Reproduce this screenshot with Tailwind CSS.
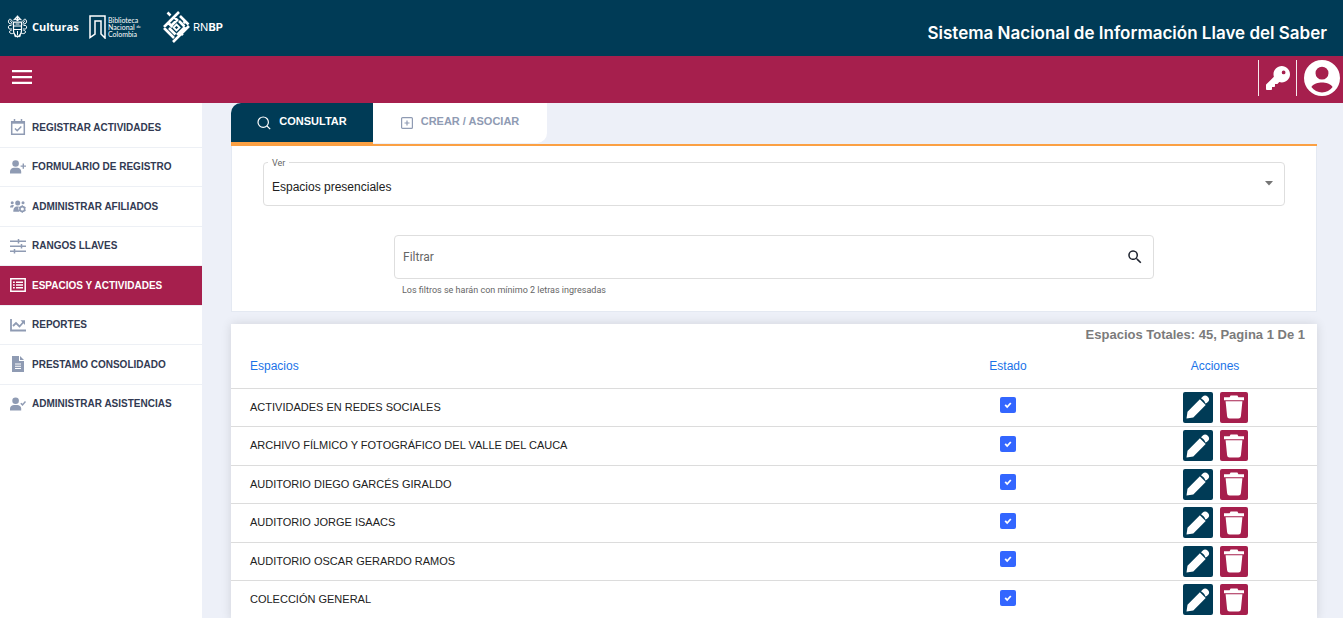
<!DOCTYPE html>
<html lang="es">
<head>
<meta charset="utf-8">
<meta name="viewport" content="width=device-width, initial-scale=1">
<title>Sistema Nacional de Información Llave del Saber</title>
<script src="https://cdn.jsdelivr.net/npm/@tailwindcss/browser@4"></script>
</head>
<body class="flex h-screen flex-col overflow-hidden bg-[#edf0f8] font-['Liberation_Sans',Arial,sans-serif] text-[#212529]">

<svg class="hidden" aria-hidden="true">
  <symbol id="pencil" viewBox="0 0 24 24"><path fill="currentColor" d="M.5 23.500l1-6.800L13.900 4.300l5.800 5.800L7.300 22.500zM15 3.200l1.800-1.800c1.500-1.500 3.400-1.300 5 .3s1.800 3.500.3 5L20.700 8.100l-1.300.3C18.500 6 17.500 4.800 15 3.200z"/></symbol>
  <symbol id="trash" viewBox="0 0 20 24"><path fill="currentColor" d="M0 2.200h5.600L6.600 .6h6.800l1 1.600H20v3H0zM1.600 6.300h16.800l-1.500 14.900a2.500 2.500 0 0 1-2.500 2.300H5.600a2.500 2.500 0 0 1-2.500-2.300z"/></symbol>
</svg>

<header class="flex h-14 shrink-0 items-center justify-between bg-[#003b56] pr-4 pl-[7px] text-white">
  <div class="flex items-center pb-[2px]">
    <div class="flex w-[82px] items-center gap-1">
      <svg class="h-6 w-[21px]" viewBox="0 0 42 48" fill="none" stroke="currentColor" stroke-width="2" aria-hidden="true">
        <path d="M13 14h16v17c0 6-3 10-8 13-5-3-8-7-8-13z" stroke-width="2.500"/><path d="M13 22h16M13 29h16M21 32v9M17 18h8"/>
        <path d="M13 10c3-1 5-2 6-6h4c1 4 3 5 6 6M15 7l6 4 6-4M21 1v10" stroke-width="2.500"/>
        <path d="M11 13C7 5 2 9 3 14c1 4 4 4 8 4M31 13c4-8 9-4 8 1-1 4-4 4-8 4M9 21c-5-1-7 1-6 5 1 3 4 2 7 2M33 21c5-1 7 1 6 5-1 3-4 2-7 2M9 31c-4 0-5 2-3 5 2 2 5 1 7 1M33 31c4 0 5 2 3 5-2 2-5 1-7 1M14 41l4 3M28 41l-4 3M6 11l4 5M36 11l-4 5"/>
      </svg>
      <span class="font-['Open_Sans',sans-serif] text-[11px] leading-4 font-bold">Culturas</span>
    </div>
    <div class="flex w-[74px] items-center gap-[2px]">
      <svg class="h-6 w-[17px] shrink-0" viewBox="0 0 17 24" fill="none" stroke="currentColor" stroke-width="1.500" aria-hidden="true"><path d="M1 1h15v22l-4-4V6H6v13l-5 3.500z"/></svg>
      <div class="font-[Lato,sans-serif] text-[7px] leading-[7px] whitespace-nowrap">Biblioteca<br>Nacional <sup class="text-[4px]">de</sup><br>Colombia</div>
    </div>
    <div class="flex items-center gap-[3px]">
      <svg class="h-8 w-[27px]" viewBox="0 0 27 32" fill="none" stroke="currentColor" stroke-width="2.600" aria-hidden="true">
        <path d="M4.500 1.500l3 3M6 11l10-10M11 6l4 4M17 5l8.500 8.500M1 16l7-7M5.500 12l4 4M14 9l-6.500 6.500M16 10l5.500 5.500M1 17l10 10M6 17l6.500 6.500M22 16l-8 8M26 15L10 31M16.500 20.500l3.500 3.500M20.500 12l2.500-2"/>
        <path d="M13.500 13.500l3 3-3 3-3-3z" stroke-width="1.800"/>
      </svg>
      <span class="font-[Inter,sans-serif] text-[11px] leading-4">RN<b>BP</b></span>
    </div>
  </div>
  <h1 class="mt-3 font-[Inter,sans-serif] text-[17px] font-semibold">Sistema Nacional de Información Llave del Saber</h1>
</header>

<nav class="flex h-[47px] shrink-0 items-center justify-between bg-[#a61f4d] pr-[3px] pl-3 text-white">
  <button type="button" aria-label="Menú" class="mb-[6px]">
    <svg class="h-[14px] w-5" viewBox="0 0 20 14" fill="currentColor"><path d="M0 0h20v2.300H0zM0 6h20v2.300H0zM0 11.700h20v2.300H0z"/></svg>
  </button>
  <div class="mb-[3px] flex h-9 items-center">
    <button type="button" aria-label="Llave" class="flex h-9 w-[38px] items-center justify-center border-l border-white/90">
      <svg class="h-6 w-6" viewBox="0 0 512 512" fill="currentColor"><path d="M336 352c97.200 0 176-78.800 176-176S433.200 0 336 0 160 78.800 160 176c0 18.700 2.900 36.800 8.300 53.700L7 391c-4.500 4.500-7 10.600-7 17v80c0 13.300 10.700 24 24 24h80c13.300 0 24-10.700 24-24v-40h40c13.300 0 24-10.700 24-24v-40h40c6.400 0 12.500-2.500 17-7l33.300-33.300c16.900 5.400 35 8.300 53.700 8.300zM376 96a40 40 0 1 1 0 80 40 40 0 1 1 0-80z"/></svg>
    </button>
    <button type="button" aria-label="Cuenta" class="flex h-9 items-center border-l border-white/90 pl-[7px]">
      <svg class="h-9 w-9" viewBox="2 2 20 20" fill="currentColor"><path d="M12 2a10 10 0 1 0 0 20 10 10 0 0 0 0-20zm0 3.700a3.600 3.600 0 1 1 0 7.200 3.600 3.600 0 0 1 0-7.200zm0 14.300c-2.300 0-4.500-1.100-5.900-3 .8-1.700 4-2.500 5.900-2.500s5.100.8 5.900 2.500a7.300 7.300 0 0 1-5.900 3z"/></svg>
    </button>
  </div>
</nav>

<div class="flex min-h-0 flex-1">
  <aside class="w-[202px] shrink-0 bg-white pt-[5px]">
    <ul class="flex h-[315px] flex-col text-[10px] font-bold text-[#323a52] [&_a]:flex [&_a]:h-full [&_a]:items-center [&_a]:gap-[6px] [&_a]:pl-[10px] [&_li]:flex-1 [&_li]:border-b [&_li]:border-[#edf0f5] [&_svg]:h-4 [&_svg]:w-4 [&_svg]:text-[#8f9bb3]">
      <li><a href="#"><svg viewBox="0 0 16 16" fill="none" stroke="currentColor" stroke-width="1.500"><path d="M1.700 2.700h12.600v12.500H1.700zM4.500 0v3M11.500 0v3M5 9.500l2.200 2.200L11.300 7.500"/><path d="M1.700 3.700h12.600" stroke-width="2"/></svg>REGISTRAR ACTIVIDADES</a></li>
      <li><a href="#"><svg viewBox="0 0 16 16" fill="currentColor"><circle cx="5.600" cy="4.500" r="3.300"/><path d="M0 14.500v-2C0 10 2 8.700 4 8.700h3.200c2 0 4 1.300 4 3.800v2zM12.600 4.500H14v2h2v1.300h-2v2h-1.400v-2h-2V6.500h2z"/></svg>FORMULARIO DE REGISTRO</a></li>
      <li><a href="#"><svg viewBox="0 0 16 16" fill="currentColor"><circle cx="2.200" cy="4.800" r="1.500"/><circle cx="7.700" cy="5" r="2.500"/><circle cx="13" cy="4.800" r="1.500"/><path d="M0 9.500C0 7.800 1 7 2.500 7h1.400L3 9.500zM3.300 13.800c0-3 1-5.300 3.500-5.300h2l-.5 2 1 3.300z"/><circle cx="12.300" cy="11" r="2.400" fill="none" stroke="currentColor" stroke-width="1.600"/><path stroke="currentColor" stroke-width="1.300" d="M12.300 7.300v1.500M12.300 13.200v1.500M9.100 9.200l1.200.7M14.300 12.100l1.200.7M15.500 9.200l-1.200.7M10.300 12.100l-1.200.7"/></svg>ADMINISTRAR AFILIADOS</a></li>
      <li><a href="#"><svg viewBox="0 0 16 16" fill="none" stroke="currentColor" stroke-width="1.500"><path d="M0 3.200h16M0 8.200h16M0 13.200h16M8.500 1v4.400M11.500 6v4.400M4.500 11v4.400"/></svg>RANGOS LLAVES</a></li>
      <li class="bg-[#a61f4d] text-white"><a href="#" aria-current="page"><svg viewBox="0 0 16 16" fill="none" stroke="white" stroke-width="1.500"><path d="M.8 1.800h14.400v12.400H.8zM6 5.200h7M6 8h7M6 10.800h7M3 5.200h1.800M3 8h1.800M3 10.800h1.800"/></svg>ESPACIOS Y ACTIVIDADES</a></li>
      <li><a href="#"><svg viewBox="0 0 16 16" fill="none" stroke="currentColor" stroke-width="1.800"><path d="M1 2v11.500h15M3 9l3-3 3.500 3.500L13.500 5"/><path d="M10.500 3.300H15V8z" fill="currentColor" stroke="none"/></svg>REPORTES</a></li>
      <li><a href="#"><svg viewBox="0 0 16 16" fill="currentColor"><path fill-rule="evenodd" d="M2 0h7v5h5v11H2zM5 7.500v1h6v-1zm0 2.300v1h6v-1zm0 2.300v1h6v-1zM10 0l4 4h-4z"/></svg>PRESTAMO CONSOLIDADO</a></li>
      <li class="border-none"><a href="#"><svg viewBox="0 0 16 16" fill="currentColor"><circle cx="5.600" cy="4.800" r="3.300"/><path d="M0 14.500v-2C0 10.300 2 9 4 9h3.200c2 0 4 1.300 4 3.500v2z"/><path d="M10.800 7.200l1.700 1.700 3-3.400" fill="none" stroke="currentColor" stroke-width="1.500"/></svg>ADMINISTRAR ASISTENCIAS</a></li>
    </ul>
  </aside>

  <main class="min-w-0 flex-1 pr-[26px] pl-[29px]">
    <div class="flex h-[43px] border-b-2 border-[#fba043] text-[11px] font-bold">
      <button type="button" class="flex h-[43px] w-[142px] items-center justify-center gap-2 rounded-tl-[10px] border-b-4 border-[#fba043] bg-[#003b56] pb-[2px] text-white">
        <svg class="mt-[3px] h-[14px] w-[14px]" viewBox="0 0 14 14" fill="none" stroke="currentColor" stroke-width="1.200"><circle cx="6.200" cy="6.200" r="5.200"/><path d="M10 10l3.200 3.200"/></svg>
        CONSULTAR
      </button>
      <button type="button" class="flex h-10 w-[174px] items-center justify-center gap-2 rounded-br-[10px] bg-white pb-[3px] text-[#8f9bb3]">
        <svg class="mt-[3px] h-3 w-3" viewBox="0 0 12 12" fill="none" stroke="currentColor" stroke-width="1.200"><rect x=".6" y=".6" width="10.800" height="10.800" rx="1"/><path d="M6 3.500v5M3.500 6h5"/></svg>
        CREAR / ASOCIAR
      </button>
    </div>

    <section class="h-[166px] border border-t-0 border-[#e4e9f2] bg-white px-[31px] pt-4">
      <div class="relative">
        <label for="ver" class="absolute -top-[6px] left-[5px] bg-white px-1 font-[Roboto,sans-serif] text-[9px] leading-[14px] text-[#666]">Ver</label>
        <select id="ver" class="h-11 w-full appearance-none rounded border border-[#dedede] bg-white pt-[6px] pl-2 text-[12px] text-[#212121]"><option>Espacios presenciales</option></select>
        <svg class="pointer-events-none absolute top-[19px] right-3 h-[5px] w-2" viewBox="0 0 8 5" fill="#757575" aria-hidden="true"><path d="M0 0h8L4 4.500z"/></svg>
      </div>
      <div class="mx-auto mt-[29px] w-3/4 max-w-[760px]">
        <div class="flex h-11 items-center rounded border border-[#dedede] px-2">
          <input type="text" aria-label="Filtrar" placeholder="Filtrar" class="h-full min-w-0 flex-1 font-[Roboto,sans-serif] text-[12px] placeholder:text-[#666] outline-none">
          <button type="button" aria-label="Buscar" class="flex h-6 w-5 items-center justify-center"><svg class="h-[18px] w-[18px]" viewBox="0 0 24 24" fill="#1f2430"><path d="M15.500 14h-.79l-.28-.27A6.500 6.500 0 1 0 13.730 14.430l.27.28v.79l5 4.990L20.490 19zm-6 0a4.500 4.500 0 1 1 0-9 4.500 4.500 0 0 1 0 9z"/></svg></button>
        </div>
        <p class="mt-1 pl-2 font-[Roboto,sans-serif] text-[9px] leading-[14px] text-[#666]">Los filtros se harán con mínimo 2 letras ingresadas</p>
      </div>
    </section>

    <section class="mt-3 bg-white shadow-[0_0_10px_rgba(0,0,0,0.12)]">
      <p class="h-[21px] pr-3 text-right text-[13px] leading-[22px] font-bold text-[#7b7b7b]">Espacios Totales: 45, Pagina 1 De 1</p>
      <table class="w-full table-fixed border-collapse text-[11px] text-[#212121] [&_td:first-child]:pl-[19px] [&_td]:p-0 [&_tr]:border-b [&_tr]:border-[#dcdcdc]">
        <colgroup><col><col class="w-[210px]"><col class="w-[204px]"></colgroup>
        <thead>
          <tr class="h-[43px] text-[12px] text-[#1a73e8] [&_th]:pb-[1px] [&_th]:font-normal"><th scope="col" class="pl-[19px] text-left">Espacios</th><th scope="col">Estado</th><th scope="col">Acciones</th></tr>
        </thead>
        <tbody id="espacios"></tbody>
      </table>
    </section>
  </main>
</div>

<template id="fila">
  <tr class="h-[38px] even:h-[39px]">
    <td></td>
    <td><span class="relative mx-auto mb-1 block h-4 w-4"><input type="checkbox" checked class="h-4 w-4 appearance-none rounded-[2px] bg-[#3366ff]"><svg class="pointer-events-none absolute top-1 left-1 h-2 w-2" viewBox="0 0 8 8" fill="none" stroke="white" stroke-width="1.800" aria-hidden="true"><path d="M1.200 3.800l2 2.200L6.800 2"/></svg></span></td>
    <td><div class="flex justify-center gap-[7px]">
      <button type="button" aria-label="Editar" class="flex h-[31px] w-[30px] items-center justify-center rounded-[2px] bg-[#003b56] text-white"><svg class="h-6 w-6"><use href="#pencil"/></svg></button>
      <button type="button" aria-label="Eliminar" class="flex h-[31px] w-7 items-center justify-center rounded-[2px] bg-[#a61f4d] text-white"><svg class="h-6 w-5"><use href="#trash"/></svg></button>
    </div></td>
  </tr>
</template>
<script>
const espacios = ["ACTIVIDADES EN REDES SOCIALES", "ARCHIVO FÍLMICO Y FOTOGRÁFICO DEL VALLE DEL CAUCA", "AUDITORIO DIEGO GARCÉS GIRALDO", "AUDITORIO JORGE ISAACS", "AUDITORIO OSCAR GERARDO RAMOS", "COLECCIÓN GENERAL"];
for (const nombre of espacios) {
  const fila = document.getElementById("fila").content.cloneNode(true);
  fila.querySelector("td").textContent = nombre;
  fila.querySelector("input").setAttribute("aria-label", nombre);
  document.getElementById("espacios").append(fila);
}
</script>
</body>
</html>
